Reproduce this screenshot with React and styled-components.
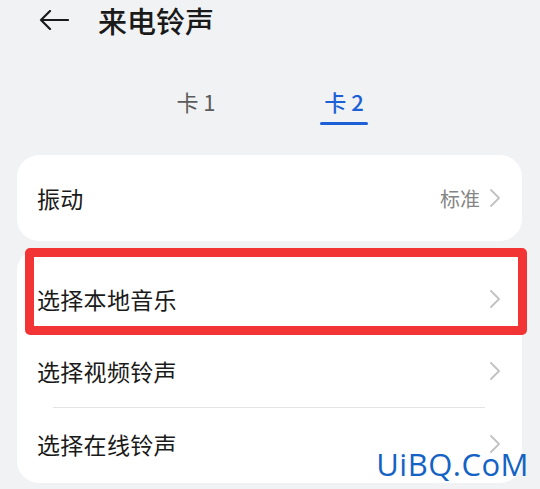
import React from 'react';
import styled, {createGlobalStyle} from 'styled-components';

// ---- styles ------
const GlobalStyle = createGlobalStyle`
    html, body {
        margin: 0;
        padding: 0;
        background: #f1f2f4;
    }
    body {
        font-family: "Noto Sans CJK SC", "Noto Sans", sans-serif;
        color: #1a1a1a;
    }
`;

const Page = styled.div`
    position: relative;
    width: 540px;
    height: 489px;
    overflow: hidden;
    background: #f1f2f4;
`;

const Header = styled.div`
    height: 40px;
    display: flex;
    align-items: center;
    padding-left: 39px;
    gap: 29px;
`;

const Title = styled.div`
    font-size: 29px;
    font-weight: 500;
    line-height: 40px;
    color: #1a1a1a;
`;

const Tabs = styled.div`
    display: flex;
    justify-content: center;
    gap: 48px;
    margin-top: 47px;
`;

const Tab = styled.div`
    width: 100px;
    display: flex;
    flex-direction: column;
    align-items: center;
    font-size: 22px;
    line-height: 28px;
    color: ${props => props.active ? '#1d5fd6' : '#5c5c5c'};
    font-weight: ${props => props.active ? 500 : 400};

    &::after {
        content: '';
        display: block;
        width: 48px;
        height: 3px;
        border-radius: 2px;
        margin-top: 7px;
        background: ${props => props.active ? '#1d5fd6' : 'transparent'};
    }
`;

const Card = styled.div`
    margin: ${props => props.top}px 18px 0 17px;
    background: #ffffff;
    border-radius: 22px;
    padding: ${props => props.pad || '0'};
`;

const Row = styled.div`
    position: relative;
    height: ${props => props.h || 72}px;
    display: flex;
    align-items: center;
    padding: 0 21px 0 20px;
    font-size: 23px;
`;

const Label = styled.div`
    flex: 1;
    letter-spacing: 0.3px;
`;

const Value = styled.div`
    font-size: 20px;
    color: #858585;
    margin-right: 9px;
`;

const Divider = styled.div`
    height: 1px;
    background: #e4e4e6;
    margin: 0 37px 0 36px;
`;

const Highlight = styled.div`
    position: absolute;
    top: -15px;
    bottom: 0;
    left: 8px;
    right: -5px;
    border: 9px solid #f23434;
    border-radius: 5px;
    pointer-events: none;
`;

const Watermark = styled.div`
    position: absolute;
    top: 449px;
    right: 11px;
    font-family: "Open Sans", "Noto Sans", sans-serif;
    font-size: 31px;
    line-height: 1;
    color: #1463c4;
    letter-spacing: 0.5px;
`;

function BackArrow() {
    return (
        <svg width="30" height="20" viewBox="0 0 30 20" fill="none">
            <path d="M29 10 H2 M11 1 L2 10 L11 19" stroke="#1a1a1a" strokeWidth="2.2"
                  strokeLinecap="round" strokeLinejoin="round"/>
        </svg>
    );
}

function Chevron() {
    return (
        <svg width="12" height="20" viewBox="0 0 12 20" fill="none">
            <path d="M2 2 L10 10 L2 18" stroke="#c2c2c2" strokeWidth="1.8"
                  strokeLinecap="round" strokeLinejoin="round"/>
        </svg>
    );
}

function App() {
    return (
        <Page>
            <GlobalStyle/>
            <Header>
                <BackArrow/>
                <Title>来电铃声</Title>
            </Header>

            <Tabs>
                <Tab>卡 1</Tab>
                <Tab active>卡 2</Tab>
            </Tabs>

            <Card top={30}>
                <Row h={86}>
                    <Label>振动</Label>
                    <Value>标准</Value>
                    <Chevron/>
                </Row>
            </Card>

            <Card top={8} pad="14px 0 3px">
                <Row>
                    <Label>选择本地音乐</Label>
                    <Chevron/>
                    <Highlight/>
                </Row>
                <Row>
                    <Label>选择视频铃声</Label>
                    <Chevron/>
                </Row>
                <Divider/>
                <Row>
                    <Label>选择在线铃声</Label>
                    <Chevron/>
                </Row>
            </Card>

            <Watermark>UiBQ.CoM</Watermark>
        </Page>
    );
}

export default App;
